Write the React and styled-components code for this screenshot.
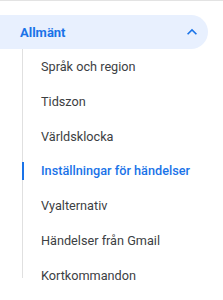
import React from "react";
import styled, { createGlobalStyle } from "styled-components";

const Global = createGlobalStyle`
  html, body { margin: 0; padding: 0; background: #fff; }
  body { font-family: Roboto, "Noto Sans", Arial, sans-serif; -webkit-font-smoothing: antialiased; }
`;

const Panel = styled.nav`
  width: 223px;
  height: 300px;
  border-top: 1px solid #e3e3e3;
  box-sizing: border-box;
  padding-top: 14px;
  overflow: hidden;
`;

const Header = styled.div`
  width: 208px;
  height: 34px;
  box-sizing: border-box;
  background: #e8f0fe;
  border-radius: 0 17px 17px 0;
  display: flex;
  align-items: center;
  justify-content: space-between;
  padding: 0 6px 0 20px;
  color: #1a73e8;
  font-size: 13px;
  font-weight: 700;
`;

const Chevron = styled.svg`
  width: 20px;
  height: 20px;
  fill: #1a73e8;
`;

const List = styled.ul`
  list-style: none;
  margin: 0 0 0 22px;
  padding: 0;
  border-left: 1px solid #e0e0e0;
  width: 180px;
  box-sizing: border-box;
  margin-top: 6px;
  height: 229px;
`;

const Item = styled.li`
  height: 34.85px;
  display: flex;
  align-items: center;
  padding-left: 18px;
  font-size: 12.7px;
  font-weight: ${(p) => (p.$active ? 500 : 400)};
  color: ${(p) => (p.$active ? "#1a73e8" : "#3c4043")};
  position: relative;
  white-space: nowrap;
  margin-top: ${(p) => (p.$first ? "-6px" : "0")};
  &::before {
    content: "";
    display: ${(p) => (p.$active ? "block" : "none")};
    position: absolute;
    left: -1px;
    top: 8px;
    bottom: 8px;
    width: 2px;
    background: #1a73e8;
  }
`;

const items = [
  "Språk och region",
  "Tidszon",
  "Världsklocka",
  "Inställningar för händelser",
  "Vyalternativ",
  "Händelser från Gmail",
  "Kortkommandon",
];

export default function App() {
  return (
    <>
      <Global />
      <Panel>
        <Header>
          <span>Allmänt</span>
          <Chevron viewBox="0 0 24 24">
            <path d="M7.41 15.41 12 10.83l4.59 4.58L18 14l-6-6-6 6z" />
          </Chevron>
        </Header>
        <List>
          {items.map((t, i) => (
            <Item key={t} $active={i === 3} $first={i === 0}>
              {t}
            </Item>
          ))}
        </List>
      </Panel>
    </>
  );
}
